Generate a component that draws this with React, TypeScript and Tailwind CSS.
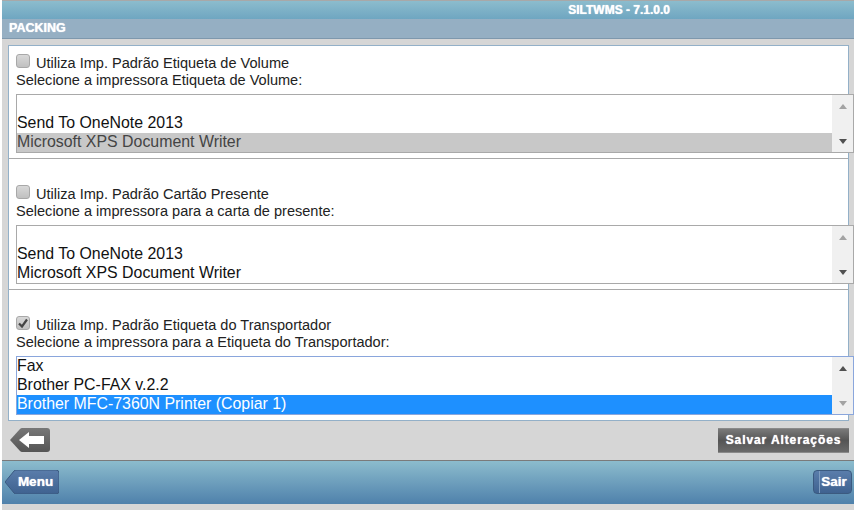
import React from "react";

const font = { fontFamily: '"Liberation Sans", Arial, sans-serif' };

function Check({ checked }: { checked?: boolean }) {
  return (
    <span className="w-[14px] h-[14px] mb-[4px] rounded-[3px] border border-[#a8a8a8] bg-gradient-to-b from-[#d8d8d8] to-[#c0c0c0] flex items-center justify-center shrink-0">
      {checked && (
        <svg width="12" height="12" viewBox="0 0 12 12">
          <path d="M2 6.5 L5 9.5 L10 2.5" fill="none" stroke="#444" strokeWidth="2.2" />
        </svg>
      )}
    </span>
  );
}

function ListBox({
  rows,
  selected,
  selectedClass,
  focus,
  upDark,
  downDark,
}: {
  rows: string[];
  selected?: number;
  selectedClass?: string;
  focus?: boolean;
  upDark?: boolean;
  downDark?: boolean;
}) {
  return (
    <div
      className={`w-[838px] h-[59px] bg-white flex border ${focus ? "border-[#8aa6dc]" : "border-[#a9a9a9]"}`}
    >
      <div className="flex-1 min-w-0">
        {rows.map((r, i) => (
          <div
            key={i}
            className={`h-[19px] leading-[17px] text-[15.9px] ${i === selected ? selectedClass : "text-[#111]"}`}
          >
            {r || "\u00a0"}
          </div>
        ))}
      </div>
      <div className="w-[21px] bg-[#f0f0f0] flex flex-col justify-between items-center pt-[9px] pb-[8px]">
        <svg width="8" height="5" viewBox="0 0 8 5">
          <path d="M4 0 L8 5 L0 5 Z" fill={upDark ? "#505050" : "#a3a3a3"} />
        </svg>
        <svg width="8" height="5" viewBox="0 0 8 5">
          <path d="M0 0 L8 0 L4 5 Z" fill={downDark ? "#505050" : "#a3a3a3"} />
        </svg>
      </div>
    </div>
  );
}

function Section({
  label,
  select,
  checked,
  rows,
  selected,
  selectedClass,
  focus,
  upDark,
  downDark,
  pt,
  border,
  h,
}: {
  label: string;
  select: string;
  checked?: boolean;
  rows: string[];
  selected?: number;
  selectedClass?: string;
  focus?: boolean;
  upDark?: boolean;
  downDark?: boolean;
  pt: string;
  border?: boolean;
  h: string;
}) {
  return (
    <div className={`${h} ${pt} pl-[7px] ${border ? "border-b border-[#a9a9a9]" : ""}`}>
      <div className="flex items-center h-[18px] text-[14.55px] text-[#222]">
        <Check checked={checked} />
        <span className="ml-[6px] pt-[2px]">{label}</span>
      </div>
      <div className="h-[16px] leading-[16px] text-[14.55px] text-[#222]">{select}</div>
      <div className="mt-[6px]">
        <ListBox
          rows={rows}
          selected={selected}
          selectedClass={selectedClass}
          focus={focus}
          upDark={upDark}
          downDark={downDark}
        />
      </div>
    </div>
  );
}

export default function App() {
  return (
    <div className="w-[860px] h-[516px] bg-white overflow-hidden pl-[2px]" style={font}>
      <div className="w-[852px] h-[510px] flex flex-col bg-[#d6d6d6]">
        <div className="h-[1px] bg-[#a8a8a8]" />
        <div className="h-[18px] bg-gradient-to-b from-[#8cbccd] to-[#6fa6c1] flex justify-end pr-[184px] text-[12px] font-bold text-white leading-[18px] [text-shadow:0_0_1px_#fff]">
          SILTWMS - 7.1.0.0
        </div>
        <div className="h-[20px] bg-[#95afc3] border-b border-[#7e98ad] pl-[7px] text-[12.5px] font-bold text-white leading-[18px] [text-shadow:0_0_1px_#fff]">
          PACKING
        </div>
        <div className="h-[421px] pt-[6px] pl-[6px] flex flex-col">
          <div className="w-[841px] h-[376px] bg-white border border-[#93b0c8]">
            <Section
              h="h-[113px]"
              pt="pt-[8px]"
              border
              label="Utiliza Imp. Padrão Etiqueta de Volume"
              select="Selecione a impressora Etiqueta de Volume:"
              rows={["", "Send To OneNote 2013", "Microsoft XPS Document Writer"]}
              selected={2}
              selectedClass="bg-[#c8c8c8] text-[#444]"
              downDark
            />
            <Section
              h="h-[131px]"
              pt="pt-[26px]"
              border
              label="Utiliza Imp. Padrão Cartão Presente"
              select="Selecione a impressora para a carta de presente:"
              rows={["", "Send To OneNote 2013", "Microsoft XPS Document Writer"]}
              downDark
            />
            <Section
              h="h-[130px]"
              pt="pt-[26px]"
              checked
              focus
              upDark
              label="Utiliza Imp. Padrão Etiqueta do Transportador"
              select="Selecione a impressora para a Etiqueta do Transportador:"
              rows={["Fax", "Brother PC-FAX v.2.2", "Brother MFC-7360N Printer (Copiar 1)"]}
              selected={2}
              selectedClass="bg-[#1e90ff] text-white"
            />
          </div>
          <div className="w-[841px] flex justify-between items-start mt-[7px] pl-[2px]">
            <svg width="40" height="24" viewBox="0 0 40 24" className="block">
              <defs>
                <linearGradient id="b" x1="0" y1="0" x2="0" y2="1">
                  <stop offset="0" stopColor="#777" />
                  <stop offset="1" stopColor="#555" />
                </linearGradient>
              </defs>
              <path d="M0 12 L10 1 Q11 0 12 0 L37 0 Q40 0 40 3 L40 21 Q40 24 37 24 L12 24 Q11 24 10 23 Z" fill="url(#b)" />
              <path d="M9 12 L19 4 L19 8 L34 8 L34 16 L19 16 L19 20 Z" fill="#fff" />
            </svg>
            <div className="w-[131px] h-[25px] bg-gradient-to-b from-[#7a7a7a] via-[#555] to-[#6a6a6a] border-y border-[#8a8a8a] text-center text-[12px] font-bold text-white leading-[23px] tracking-[0.9px] [text-shadow:0_0_1px_#fff]">
              Salvar Alterações
            </div>
          </div>
        </div>
        <div className="h-[44px] border-t border-[#7a7a7a] bg-gradient-to-b from-[#8cbccd] to-[#4f81ab] flex justify-between items-start pt-[9px] pl-[3px] pr-[2px]">
          <div className="relative w-[54px] h-[24px]">
            <svg width="54" height="24" viewBox="0 0 54 24" className="absolute inset-0">
              <defs>
                <linearGradient id="m" x1="0" y1="0" x2="0" y2="1">
                  <stop offset="0" stopColor="#5a7dab" />
                  <stop offset="1" stopColor="#3f6290" />
                </linearGradient>
              </defs>
              <path d="M0 12 L9 1 Q10 0 11 0 L51 0 Q54 0 54 3 L54 21 Q54 24 51 24 L11 24 Q10 24 9 23 Z" fill="url(#m)" stroke="#3b5a80" />
            </svg>
            <span className="absolute inset-0 flex items-center justify-center pl-[7px] text-[13.5px] font-bold text-white [text-shadow:0_0_1px_#fff]">
              Menu
            </span>
          </div>
          <div className="relative w-[39px] h-[24px] rounded-[4px] bg-gradient-to-b from-[#5a7dab] to-[#3f6290] border border-[#3b5a80] flex items-center justify-center pl-[3px] text-[13.5px] font-bold text-white [text-shadow:0_0_1px_#fff]">
            <span className="absolute left-[5px] top-0 bottom-0 w-[1px] bg-[#7f9dc0]" />
            Sair
          </div>
        </div>
      </div>
    </div>
  );
}
